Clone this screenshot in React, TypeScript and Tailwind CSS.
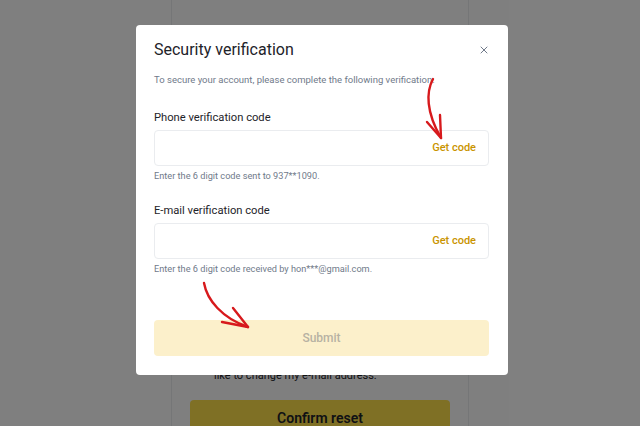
import { X } from "lucide-react";

function Field({ label, hint }: { label: string; hint: string }) {
  return (
    <div>
      <label className="block text-[11.2px] leading-4 text-[#1e2329]">{label}</label>
      <div className="mt-1 flex h-9 items-center justify-end rounded-[4px] border border-[#eaecef] px-3">
        <button type="button" className="text-[11px] font-medium text-[#c99400]">
          Get code
        </button>
      </div>
      <p className="mt-[3px] text-[9.2px] leading-[14px] text-[#707a8a]">{hint}</p>
    </div>
  );
}

function Arrows() {
  return (
    <svg className="pointer-events-none absolute inset-0" width="640" height="426" viewBox="0 0 640 426" fill="none">
      <g stroke="#d7191c" strokeWidth="2.4" strokeLinecap="round" strokeLinejoin="round">
        <path d="M433 79 C426 92 426 112 441 138" />
        <path d="M427 122 L441 138 L440 115" />
        <path d="M204 283 C207 300 222 318 248 327" />
        <path d="M222 322 L248 327 L233 308" />
      </g>
    </svg>
  );
}

export default function App() {
  return (
    <div className="relative h-[426px] w-[640px] overflow-hidden bg-white font-['Roboto','Liberation_Sans',sans-serif]">
      {/* page behind the dialog */}
      <div className="mx-auto flex h-full w-[298px] flex-col border-x border-[#eaecef] px-[18px] pt-[346px]">
        <p className="whitespace-nowrap pl-[24px] text-[11px] leading-5 text-[#1e2329]">
          We noticed a change request. I would
          <br />
          like to change my e-mail address.
        </p>
        <button type="button" className="mt-[14px] h-9 w-full shrink-0 rounded-[4px] bg-[#ffe04a] text-[14px] font-semibold text-[#1e2329]">
          Confirm reset
        </button>
      </div>

      <div className="absolute inset-0 bg-black/50" />

      <div className="absolute left-[136px] top-[25px] w-[372px] rounded-[4px] bg-white px-[18px] pb-[19px] pt-[13px] pr-[19px]">
        <div className="flex items-center justify-between">
          <h1 className="text-[16px] leading-6 text-[#1e2329]">Security verification</h1>
          <X className="mr-[-1px] h-[12px] w-[12px] text-[#707a8a]" strokeWidth={2} />
        </div>
        <p className="mt-[11px] text-[9.5px] leading-[14px] text-[#707a8a]">
          To secure your account, please complete the following verification.
        </p>
        <div className="mt-[23px] flex flex-col gap-5">
          <Field label="Phone verification code" hint="Enter the 6 digit code sent to 937**1090." />
          <Field label="E-mail verification code" hint="Enter the 6 digit code received by hon***@gmail.com." />
        </div>
        <button
          type="button"
          disabled
          className="mt-[44px] h-9 w-full rounded-[4px] bg-[#fcf0cb] text-[12px] font-medium text-[#b7b2a3]"
        >
          Submit
        </button>
      </div>

      <Arrows />
    </div>
  );
}
